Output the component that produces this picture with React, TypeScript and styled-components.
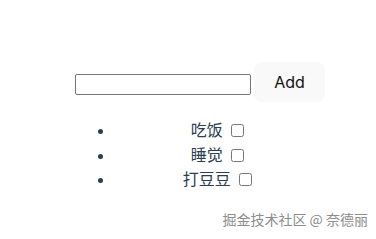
import styled, { createGlobalStyle } from "styled-components";

const GlobalStyle = createGlobalStyle`
  body {
    margin: 8px;
    background: #fff;
    font-family: Inter, "Noto Sans CJK SC", sans-serif;
    -webkit-font-smoothing: antialiased;
  }
`;

const Page = styled.div`
  position: relative;
  height: 223px;
  padding: 54px 0 0 67px;
  box-sizing: border-box;
`;

const Wrapper = styled.div`
  width: 248px;
`;

const Row = styled.div`
  display: flex;
  align-items: flex-start;
  gap: 3px;
`;

const TextInput = styled.input`
  width: 176px;
  height: 21px;
  box-sizing: border-box;
  margin: 12px 0 0;
  border: 1px solid #767676;
  border-radius: 2px;
  padding: 1px 2px;
`;

const AddButton = styled.button`
  border: 1px solid transparent;
  border-radius: 8px;
  padding: 0.6em 1.2em;
  font-size: 16px;
  font-weight: 400;
  font-family: Inter, sans-serif;
  line-height: 1.2;
  background-color: #f9f9f9;
  color: #111;
  cursor: pointer;
`;

const List = styled.ul`
  margin: 16px 0 0;
  padding-left: 40px;
  color: #2c3e50;
  font-size: 16px;
`;

const Item = styled.li`
  text-align: center;
  line-height: 24.5px;
`;

const Check = styled.input`
  width: 13px;
  height: 13px;
  margin: 0 3px 0 4px;
  vertical-align: -1px;
`;

const Watermark = styled.div`
  position: absolute;
  right: 0;
  bottom: 2px;
  font-size: 14px;
  color: #8c8c8c;
  font-family: "Noto Sans CJK SC", sans-serif;
  text-shadow: 0 0 2px #fff;
`;

const todos = ["吃饭", "睡觉", "打豆豆"];

export default function App() {
  return (
    <>
      <GlobalStyle />
      <Page>
        <Wrapper>
          <Row>
            <TextInput type="text" />
            <AddButton>Add</AddButton>
          </Row>
          <List>
            {todos.map((t) => (
              <Item key={t}>
                {t} <Check type="checkbox" />
              </Item>
            ))}
          </List>
        </Wrapper>
        <Watermark>掘金技术社区 @ 奈德丽</Watermark>
      </Page>
    </>
  );
}
